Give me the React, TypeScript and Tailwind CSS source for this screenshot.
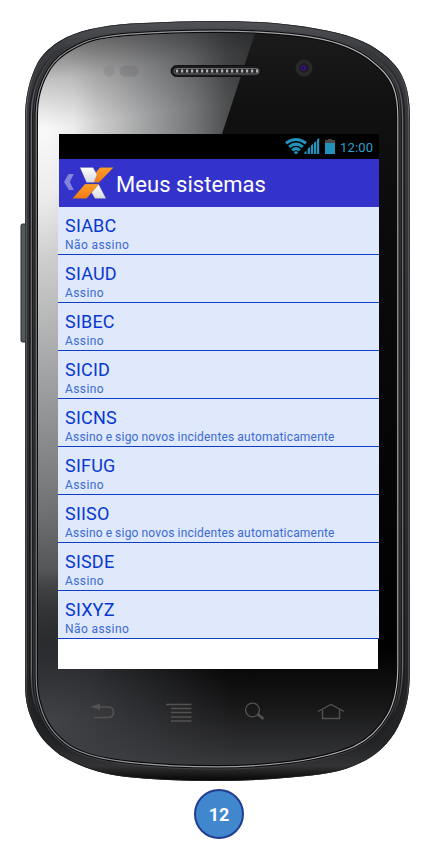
const systems = [
  { name: 'SIABC', status: 'Não assino' },
  { name: 'SIAUD', status: 'Assino' },
  { name: 'SIBEC', status: 'Assino' },
  { name: 'SICID', status: 'Assino' },
  { name: 'SICNS', status: 'Assino e sigo novos incidentes automaticamente' },
  { name: 'SIFUG', status: 'Assino' },
  { name: 'SIISO', status: 'Assino e sigo novos incidentes automaticamente' },
  { name: 'SISDE', status: 'Assino' },
  { name: 'SIXYZ', status: 'Não assino' },
];

const SHELL =
  'M25 120 C25 98 29 79 38 62 C46 49 56 43 67 37 C84 29 110 24 143 23 Q180 21 217 21 Q260 21 292 25 C325 29 352 35 370 45 C388 56 398 66 403 78 C408 89 410 102 410 120 V667 C410 698 405 713 398 727 C389 744 376 756 360 763 C343 772 320 775 290 777.500 Q255 781 215 781 Q165 781 127 777 C100 774 80 767 60 755 C47 745 38 736 32 720 C27 708 25 700 25 680 Z';
const GLASS =
  'M38 115 C38 99 42 84 50 71 C56 61 66 53 80 46.500 C92 40 107 38 130 36 Q170 33 217 33 Q264 33 300 37.500 C330 41 350 48 366 59 C379 69 388 77 392 89 Q396 99 396 118 V665 C396 686 393 702 386 714 C378 728 367 738 354 744.500 C340 751 320 756 290 760.500 Q255 765 217 765 Q170 765 130 760.500 C105 758 86 754 71 745 C56 735 46 721 42 705 Q38 694 38 675 Z';

function PhoneBody() {
  return (
    <svg className="absolute inset-0" width="430" height="858" viewBox="0 0 430 858" aria-hidden="true">
      <defs>
        <linearGradient id="shell" x1="0" y1="0" x2="0" y2="1">
          <stop offset="0" stopColor="#505256" />
          <stop offset="0.04" stopColor="#3a3b3e" />
          <stop offset="0.9" stopColor="#232426" />
          <stop offset="0.95" stopColor="#232426" />
          <stop offset="0.98" stopColor="#333335" />
          <stop offset="1" stopColor="#050505" />
        </linearGradient>
        <linearGradient id="rim" x1="0" y1="0" x2="1" y2="0">
          <stop offset="0" stopColor="#8c8f95" />
          <stop offset="0.5" stopColor="#a0a0a3" />
          <stop offset="1" stopColor="#b5b5b8" />
        </linearGradient>
        <linearGradient id="sideRim" gradientUnits="userSpaceOnUse" x1="0" y1="21" x2="0" y2="781">
          <stop offset="0.04" stopColor="#a0a0a4" stopOpacity="0" />
          <stop offset="0.12" stopColor="#a0a0a4" stopOpacity=".6" />
          <stop offset="0.85" stopColor="#a0a0a4" stopOpacity=".6" />
          <stop offset="0.92" stopColor="#a0a0a4" stopOpacity="0" />
        </linearGradient>
        <linearGradient id="sideDark" gradientUnits="userSpaceOnUse" x1="0" y1="21" x2="0" y2="781">
          <stop offset="0.03" stopColor="#1b1b1e" stopOpacity="0" />
          <stop offset="0.12" stopColor="#1b1b1e" />
          <stop offset="0.87" stopColor="#1b1b1e" />
          <stop offset="0.97" stopColor="#1b1b1e" stopOpacity="0" />
        </linearGradient>
        <linearGradient id="glass" x1="0" y1="0" x2="0" y2="1">
          <stop offset="0" stopColor="#1b1b1c" />
          <stop offset="0.1" stopColor="#111" />
          <stop offset="0.25" stopColor="#0b0b0b" />
          <stop offset="0.84" stopColor="#010101" />
          <stop offset="0.92" stopColor="#171718" />
          <stop offset="1" stopColor="#37383a" />
        </linearGradient>
        <radialGradient id="shine" gradientUnits="userSpaceOnUse" cx="0" cy="0" r="1" gradientTransform="translate(42 115) scale(232 590)">
          <stop offset="0" stopColor="#fcfcfc" />
          <stop offset="0.14" stopColor="#ececec" />
          <stop offset="0.24" stopColor="#cfcfcf" />
          <stop offset="0.45" stopColor="#a0a1a2" />
          <stop offset="0.66" stopColor="#727476" />
          <stop offset="0.8" stopColor="#4c4e50" />
          <stop offset="1" stopColor="#303133" />
        </radialGradient>
        <linearGradient id="topShade" gradientUnits="userSpaceOnUse" x1="150" y1="33" x2="162" y2="112">
          <stop offset="0" stopColor="#101012" stopOpacity=".5" />
          <stop offset="0.4" stopColor="#101012" stopOpacity=".22" />
          <stop offset="1" stopColor="#101012" stopOpacity="0" />
        </linearGradient>
        <linearGradient id="shineFade" gradientUnits="userSpaceOnUse" x1="0" y1="570" x2="0" y2="690">
          <stop offset="0" stopColor="#fff" />
          <stop offset="1" stopColor="#000" />
        </linearGradient>
        <mask id="fade" maskUnits="userSpaceOnUse" x="0" y="0" width="430" height="858">
          <rect width="430" height="858" fill="url(#shineFade)" />
        </mask>
        <radialGradient id="corner" gradientUnits="userSpaceOnUse" cx="0" cy="0" r="1" gradientTransform="translate(48 725) scale(190 150)">
          <stop offset="0" stopColor="#414348" />
          <stop offset="1" stopColor="#414348" stopOpacity="0" />
        </radialGradient>
        <clipPath id="glassClip"><path d={GLASS} /></clipPath>
        <clipPath id="shellClip"><path d={SHELL} /></clipPath>
      </defs>
      <rect x="21" y="224" width="7" height="118" rx="1.500" fill="#555b5c" stroke="#292d2f" />
      <path d={SHELL} fill="url(#shell)" />
      <g clipPath="url(#shellClip)" fill="none">
        <path d={SHELL} stroke="url(#sideRim)" strokeWidth="3" />
        <path d={SHELL} stroke="#222326" strokeWidth="1.500" />
        <path d={GLASS} stroke="url(#sideDark)" strokeWidth="18" />
        <path d={GLASS} stroke="url(#sideRim)" strokeWidth="14.500" />
        <path d={GLASS} stroke="url(#sideDark)" strokeWidth="12" />
        <path d={GLASS} stroke="#414246" strokeWidth="9" />
        <path d={GLASS} stroke="#0c0c0e" strokeWidth="7" />
        <path d={GLASS} stroke="url(#rim)" strokeWidth="4.800" />
        <path d={GLASS} stroke="#0a0a0b" strokeWidth="2.500" />
      </g>
      <path d={GLASS} fill="url(#glass)" />
      <g clipPath="url(#glassClip)">
        <path d="M30 20H258L255 33L222 134L100 690H30Z" fill="url(#shine)" mask="url(#fade)" />
        <path d="M30 20H258L255 33L222 134H30Z" fill="url(#topShade)" />
        <rect x="30" y="575" width="230" height="190" fill="url(#corner)" />
      </g>
      {/* proximity sensors */}
      <circle cx="109" cy="71" r="5.500" fill="#77777c" opacity=".28" />
      <rect x="119.500" y="65.500" width="19.500" height="11" rx="5.500" fill="#66666b" opacity=".3" />
      {/* earpiece */}
      <rect x="171" y="65.500" width="90.500" height="11" rx="5.500" fill="#1b1b1d" stroke="#111113" />
      <rect x="174" y="68.500" width="85" height="5.500" rx="2.750" fill="#29292c" stroke="#7b7b7f" strokeWidth=".8" />
      <path d="M176 71H258" stroke="#b2b2b5" strokeWidth="3.200" strokeDasharray="2.200 2.800" />
      {/* front camera */}
      <circle cx="304" cy="68" r="8.500" fill="#29292b" />
      <circle cx="304" cy="68" r="5" fill="#1e1b24" />
      <circle cx="303.500" cy="68" r="2.600" fill="#3a118a" />
      <circle cx="303.500" cy="68" r="1" fill="#160428" />
    </svg>
  );
}

function StatusBar() {
  return (
    <div className="ml-px flex h-[25px] w-[320px] items-center justify-end bg-black pr-[6px]">
      <svg width="54" height="25" viewBox="0 0 54 25" aria-hidden="true">
        <g fill="none" stroke="#2292bd" strokeWidth="3">
          <path d="M1 9.300Q11 1.800 21 9.300" />
          <path d="M4.200 12.900Q11 7.400 17.800 12.900" />
          <path d="M7.200 16.300Q11 13 14.800 16.300" />
        </g>
        <path d="M8.600 18.200Q11 16.400 13.400 18.200L11 20.500Z" fill="#2292bd" />
        <path d="M19.500 20V18L21.500 17V20ZM22.600 20V14.800L25 13V20ZM25.800 20V11.600L28.200 9.800V20ZM29 20V8.800L31.200 7.200V20ZM31.900 20V5.600L34.200 4V20Z" fill="#2292bd" />
        <path d="M40 9V6H43V5H47V6H50V9Z" fill="#4a4a4a" />
        <rect x="40" y="9" width="10" height="11" fill="#2292bd" />
      </svg>
      <span className="ml-px w-[33px] whitespace-nowrap text-[13px] leading-[25px] tracking-[0.150px] text-[#2c9fcb]"><span className="relative top-px">12:00</span></span>
    </div>
  );
}

function TitleBar() {
  return (
    <header className="ml-px flex h-12 w-[320px] items-center bg-[#3333cb]">
      <svg className="shrink-0" width="57" height="48" viewBox="0 0 57 48" aria-hidden="true">
        <defs>
          <linearGradient id="orange" x1="0" y1="0" x2="0" y2="1">
            <stop offset="0" stopColor="#ff9e28" />
            <stop offset="1" stopColor="#f47a16" />
          </linearGradient>
          <linearGradient id="silver" x1="0" y1="0" x2="0" y2="1">
            <stop offset="0" stopColor="#fff" />
            <stop offset="1" stopColor="#d6dae0" />
          </linearGradient>
        </defs>
        <path d="M9.500 15H14.800L10.800 23L14.800 31H10L5 23Z" fill="#8584dc" />
        <g stroke="#51546f" strokeOpacity=".4" strokeWidth=".6">
          <path d="M41 8.500H54.500L40 23.600H34L36 14.500Z" fill="url(#orange)" />
          <path d="M21 8.500H34L38 15.500L35 23.600H27.500Z" fill="url(#silver)" />
          <path d="M39.500 25L47 39.500H36L31 31Z" fill="url(#silver)" />
          <path d="M26 25H40L27.500 39.500H13.500Z" fill="url(#orange)" />
        </g>
      </svg>
      <h1 className="whitespace-nowrap text-[22px] leading-[48px] tracking-[0.050px] text-white"><span className="relative top-[2px]">Meus sistemas</span></h1>
    </header>
  );
}

function NavButtons() {
  return (
    <nav className="ml-[31px] mt-[32px] flex h-[22px] w-[256px] items-center justify-between text-[#545150]">
      <svg width="26" height="22" viewBox="0 0 26 22" fill="none" stroke="currentColor" strokeWidth="1.700">
        <path d="M9 6H19Q24.500 6 24.500 11.300Q24.500 16.500 19 16.500H5" />
        <path d="M1.500 5.800L11 2.500V9Z" fill="currentColor" stroke="none" />
      </svg>
      <svg width="26" height="22" viewBox="0 0 26 22" fill="none" stroke="currentColor" strokeWidth="1.400">
        <path d="M0 3.500H25.500M5 7.500H25.500M5 11.500H25.500M5 16H25.500M5 20H25.500" />
      </svg>
      <svg width="22" height="22" viewBox="0 0 22 22" fill="none" stroke="currentColor">
        <circle cx="8.500" cy="9" r="6.900" strokeWidth="1.400" />
        <path d="M13.500 13L19.500 18" strokeWidth="2.600" />
      </svg>
      <svg width="28" height="22" viewBox="0 0 28 22" fill="none" stroke="currentColor" strokeWidth="1.400">
        <path d="M1 10.500L14 3.500L27 10.500M5.500 9V17.500H22.500V9" />
      </svg>
    </nav>
  );
}

export default function App() {
  return (
    <main className="relative h-[858px] w-[430px] overflow-hidden bg-white font-[Roboto,sans-serif]">
      <PhoneBody />
      <div className="relative flex flex-col pl-[58px] pt-[134px]">
        <section className="h-[535px]">
          <StatusBar />
          <TitleBar />
          <ul className="w-[321px] bg-[#e0e8fb]">
            {systems.map((s) => (
              <li key={s.name} className="h-12 border-b border-[#0d3fca] pl-[7px] pt-[8px]">
                <div className="text-[18px] leading-[22px] tracking-[0.200px] text-[#0738d0]">{s.name}</div>
                <div
                  className={`whitespace-nowrap text-[12px] leading-[16px] text-[#396bd1] ${
                    s.status.length > 12 ? 'tracking-[0.200px] [word-spacing:-0.300px]' : 'tracking-[0.400px]'
                  }`}
                >
                  {s.status}
                </div>
              </li>
            ))}
          </ul>
          <div className="h-[30px] w-[320px] bg-white" />
        </section>
        <NavButtons />
      </div>
      <div className="relative ml-[194px] mt-[66px] flex size-[50px] items-center justify-center rounded-full border-2 border-[#213c91] bg-[#4187ce] text-[18px] font-bold text-white">
        12
      </div>
    </main>
  );
}
